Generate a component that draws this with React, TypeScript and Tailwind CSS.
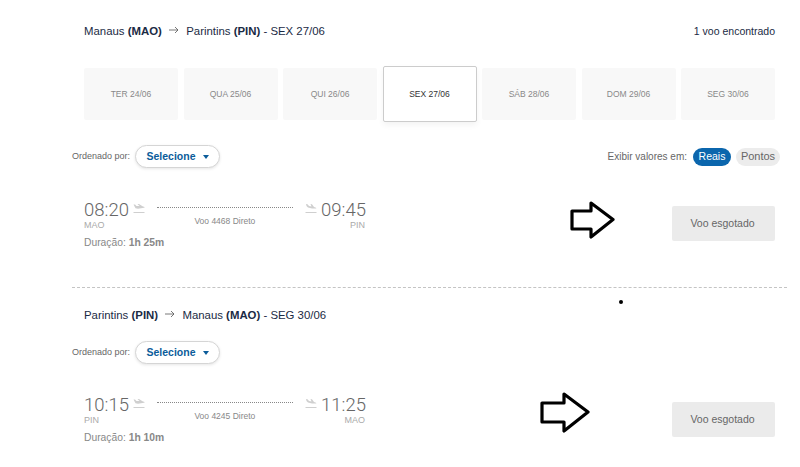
import React from 'react';

const dates = [
  { label: 'TER 24/06' },
  { label: 'QUA 25/06' },
  { label: 'QUI 26/06' },
  { label: 'SEX 27/06', active: true },
  { label: 'SÁB 28/06' },
  { label: 'DOM 29/06' },
  { label: 'SEG 30/06' },
];

const PlaneUp = () => (
  <svg width="12" height="11" viewBox="0 0 12 11" className="text-[#cfcfcf]" fill="currentColor">
    <path d="M0.5 0.5 L2 0.5 L3.5 2 L6.5 2 L4.5 0 L6 0 L9.5 2.2 L11.5 3 Q12 3.6 11 3.8 L5 4.8 L2.5 4.2 Z" />
    <rect x="0.5" y="8" width="11" height="1" />
  </svg>
);

const PlaneDown = () => (
  <svg width="12" height="11" viewBox="0 0 12 11" className="text-[#cfcfcf]" fill="currentColor">
    <path d="M1 0 L2.5 0.2 L4 2 L6.5 2.4 L5.5 0 L7 0.2 L9 3 L11 3.8 Q12 4.6 10.8 4.6 L7 4.4 L3 3.4 L1.5 2 Z" />
    <rect x="0.5" y="8" width="11" height="1" />
  </svg>
);

// Seta desenhada por cima do print
const Arrow1 = () => (
  <svg width="46" height="38" viewBox="0 0 46 38" className="absolute left-[570px] top-[201px]" fill="none" stroke="#000" strokeWidth="3.2" strokeLinejoin="round">
    <path d="M2 10 H21 V2 L43 18.5 L21 36 V28 H2 Z" />
  </svg>
);

const Arrow2 = () => (
  <svg width="50" height="41" viewBox="0 0 50 41" className="absolute left-[540px] top-[392px]" fill="none" stroke="#000" strokeWidth="3.2" strokeLinejoin="round">
    <path d="M2 11 H24 V2 L48 20 L24 39 V30 H2 Z" />
  </svg>
);

const ThinArrow = () => (
  <svg width="10" height="8" viewBox="0 0 10 8" className="mx-[4px] inline-block align-[1px]" fill="none" stroke="#555" strokeWidth="0.8">
    <path d="M0 4 H9 M6 1 L9 4 L6 7" />
  </svg>
);

function SortRow({ children }: { children?: React.ReactNode }) {
  return (
    <div className="flex h-[23px] items-center justify-between pr-[7px]">
      <div className="flex items-center">
        <span className="w-[63px] text-[9px] text-[#666]">Ordenado por:</span>
        <button className="flex h-[23px] w-[85px] items-center justify-center gap-[7px] rounded-full border border-[#d5d5d5] bg-white text-[10.5px] font-bold text-[#0b5c9a] shadow-[0_1px_3px_rgba(0,0,0,0.1)]">
          Selecione
          <span className="h-0 w-0 border-x-[3px] border-t-[4px] border-x-transparent border-t-[#0b5c9a]" />
        </button>
      </div>
      {children}
    </div>
  );
}

function FlightRow(props: {
  dep: string;
  arr: string;
  from: string;
  to: string;
  flight: string;
  duration: string;
  buttonClass: string;
}) {
  return (
    <div className="flex items-start justify-between pl-[12px] pr-[12px]">
      <div className="w-[281px]">
        <div className="flex items-start">
          <div className="w-[49px]">
            <div className="h-[20px] font-['Roboto',sans-serif] text-[18.5px] font-light leading-[20px] text-[#666]">{props.dep}</div>
            <div className="text-[9px] leading-[11px] text-[#aaa]">{props.from}</div>
          </div>
          <div className="mt-[4px]">
            <PlaneUp />
          </div>
          <div className="ml-[12px] w-[137px] text-center">
            <div className="mt-[7px] border-t border-dotted border-[#888]" />
            <div className="mt-[8px] text-[8.5px] leading-[11px] text-[#888]">{props.flight}</div>
          </div>
          <div className="ml-[12px] mt-[4px]">
            <PlaneDown />
          </div>
          <div className="ml-[4px] w-[44px] text-right">
            <div className="h-[20px] font-['Roboto',sans-serif] text-[18.5px] font-light leading-[20px] text-[#666]">{props.arr}</div>
            <div className="text-[9px] leading-[11px] text-[#aaa]">{props.to}</div>
          </div>
        </div>
        <div className="mt-[6px] text-[10.3px] leading-[12px] text-[#888]">
          Duração: <b className="font-bold">{props.duration}</b>
        </div>
      </div>
      <button className={`h-[35px] w-[103px] rounded-[2px] bg-[#ebebeb] pr-[2px] text-[10.5px] text-[#666] ${props.buttonClass}`}>Voo esgotado</button>
    </div>
  );
}

export default function App() {
  return (
    <div className="relative h-[467px] w-[800px] overflow-hidden bg-white pl-[72px] pr-[13px] pt-[24px] font-['Liberation_Sans',sans-serif]">
      <div className="flex h-[16px] items-center justify-between px-[12px] text-[11.4px] text-[#1a2a44]">
        <div>
          Manaus <b>(MAO)</b> <ThinArrow /> Parintins <b>(PIN)</b> - SEX 27/06
        </div>
        <div className="text-[10.5px]">1 voo encontrado</div>
      </div>

      <div className="mt-[26px] flex h-[56px] items-center justify-between px-[12px]">
        {dates.map((d) =>
          d.active ? (
            <div key={d.label} className="flex h-[56px] w-[94px] items-center justify-center rounded-[2px] border border-[#ccc] bg-white text-[8.5px] text-[#333] shadow-[0_3px_6px_rgba(0,0,0,0.05)]">
              {d.label}
            </div>
          ) : (
            <div key={d.label} className="flex h-[52px] w-[94px] items-center justify-center rounded-[2px] bg-[#f8f8f8] text-[8.5px] text-[#888]">
              {d.label}
            </div>
          ),
        )}
      </div>

      <div className="mt-[23px]">
        <SortRow>
          <div className="flex items-center text-[10px] text-[#666]">
            <span className="mr-[6px]">Exibir valores em:</span>
            <span className="flex h-[18px] w-[38px] items-center justify-center rounded-full bg-[#0b66ad] text-[10.5px] text-white">Reais</span>
            <span className="ml-[5px] flex h-[18px] w-[44px] items-center justify-center rounded-full bg-[#ececec] text-[11px]">Pontos</span>
          </div>
        </SortRow>
      </div>

      <div className="mt-[32px]">
        <FlightRow dep="08:20" arr="09:45" from="MAO" to="PIN" flight="Voo 4468 Direto" duration="1h 25m" buttonClass="mt-[6px]" />
      </div>

      <div className="mt-[38px] border-t border-dashed border-[#c4c4c4]" />

      <div className="mt-[19px] h-[16px] px-[12px] text-[11.4px] leading-[16px] text-[#1a2a44]">
        Parintins <b>(PIN)</b> <ThinArrow /> Manaus <b>(MAO)</b> - SEG 30/06
      </div>

      <div className="mt-[18px]">
        <SortRow />
      </div>

      <div className="mt-[31px]">
        <FlightRow dep="10:15" arr="11:25" from="PIN" to="MAO" flight="Voo 4245 Direto" duration="1h 10m" buttonClass="mt-[7px]" />
      </div>

      {/* marcações por cima do print */}
      <Arrow1 />
      <Arrow2 />
      <div className="absolute left-[619px] top-[300px] h-[4px] w-[4px] rounded-full bg-black" />
    </div>
  );
}
